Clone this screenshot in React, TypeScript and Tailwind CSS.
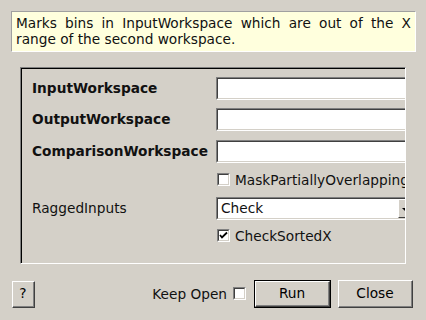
import React from 'react';

const font = { fontFamily: '"DejaVu Sans", Verdana, sans-serif' };

const Sunken = ({ children, className }: { children?: React.ReactNode; className?: string }) => (
  <div className={`border-t border-l border-[#808080] border-b border-r border-b-white border-r-white ${className ?? ''}`}>
    <div className="h-full w-full border-t border-l border-[#404040] border-b border-r border-b-[#d4d0c8] border-r-[#d4d0c8] bg-white">
      {children}
    </div>
  </div>
);

const CheckBox = ({ checked }: { checked?: boolean }) => (
  <div className="w-[13px] h-[13px] shrink-0 border-t border-l border-[#808080] border-b border-r border-b-white border-r-white">
    <div className="w-full h-full border-t border-l border-[#404040] border-b border-r border-b-[#d4d0c8] border-r-[#d4d0c8] bg-white flex items-center justify-center">
      {checked && (
        <svg width="9" height="9" viewBox="0 0 9 9">
          <path d="M1 4 L3 6.5 L8 1.5" stroke="#000" strokeWidth="1.8" fill="none" />
        </svg>
      )}
    </div>
  </div>
);

const Button = ({ children, className, isDefault }: { children: React.ReactNode; className?: string; isDefault?: boolean }) => (
  <div className={`${isDefault ? 'border border-black' : ''} ${className ?? ''}`}>
    <div className="h-full w-full border-t border-l border-white border-b border-r border-b-[#404040] border-r-[#404040]">
      <div className="h-full w-full border-b border-r border-[#808080] flex items-center justify-center text-[#000]">
        {children}
      </div>
    </div>
  </div>
);

const Row = ({ label, bold, children, className }: { label?: string; bold?: boolean; children: React.ReactNode; className?: string }) => (
  <div className={`flex items-center ${className ?? ''}`}>
    <div className={`w-[184px] shrink-0 ${bold ? 'font-bold' : ''}`}>{label}</div>
    <div className="flex-1 min-w-0">{children}</div>
  </div>
);

export default function App() {
  return (
    <div className="w-[426px] h-[320px] bg-[#d4d0c8] text-[13.7px] text-[#111] overflow-hidden" style={font}>
      <div className="pt-[11px] pl-[11px]">
        <div className="w-[405px] h-[41px] border-t border-l border-[#a0a0a0] border-b border-r border-b-white border-r-white bg-[#ffffdd] pl-[4px] pr-[4px] pt-[3px] leading-[16px] text-justify">
          Marks bins in InputWorkspace which are out of the X range of the second workspace.
        </div>
      </div>

      <div className="ml-[20px] mt-[15px] w-[386px] h-[197px] border-t border-l border-[#808080] border-b border-r border-b-white border-r-white">
        <div className="h-full w-full border-t border-l border-black overflow-hidden pl-[10px] pt-[8px]">
          <Row label="InputWorkspace" bold className="h-[23px]">
            <Sunken className="h-[23px] w-[200px]" />
          </Row>
          <Row label="OutputWorkspace" bold className="h-[23px] mt-[8px]">
            <Sunken className="h-[23px] w-[200px]" />
          </Row>
          <Row label="ComparisonWorkspace" bold className="h-[23px] mt-[9px]">
            <Sunken className="h-[23px] w-[200px]" />
          </Row>
          <Row className="h-[22px] mt-[6px]">
            <div className="flex items-center gap-[5px] pl-[1px] whitespace-nowrap">
              <CheckBox />
              <span>MaskPartiallyOverlapping</span>
            </div>
          </Row>
          <Row label="RaggedInputs" className="h-[22px] mt-[6px]">
            <Sunken className="h-[23px] w-[200px]">
              <div className="flex h-full items-center">
                <span className="pl-[3px] flex-1">Check</span>
                <div className="w-[16px] h-full bg-[#d4d0c8] border-l border-t border-white border-b border-b-[#404040] relative">
                  <div className="absolute left-[3px] top-[8px] w-0 h-0 border-l-[3px] border-r-[3px] border-t-[3px] border-l-transparent border-r-transparent border-t-black" />
                </div>
              </div>
            </Sunken>
          </Row>
          <Row className="h-[22px] mt-[6px]">
            <div className="flex items-center gap-[5px] pl-[1px] whitespace-nowrap">
              <CheckBox checked />
              <span>CheckSortedX</span>
            </div>
          </Row>
        </div>
      </div>

      <div className="flex items-center mt-[16px] h-[28px]">
        <Button className="ml-[12px] w-[23px] h-[27px]">?</Button>
        <div className="ml-auto flex items-center gap-[6px]">
          <span>Keep Open</span>
          <CheckBox />
        </div>
        <Button isDefault className="ml-[8px] w-[77px] h-[28px]">Run</Button>
        <Button className="ml-[7px] mr-[13px] w-[75px] h-[28px]">Close</Button>
      </div>
    </div>
  );
}
